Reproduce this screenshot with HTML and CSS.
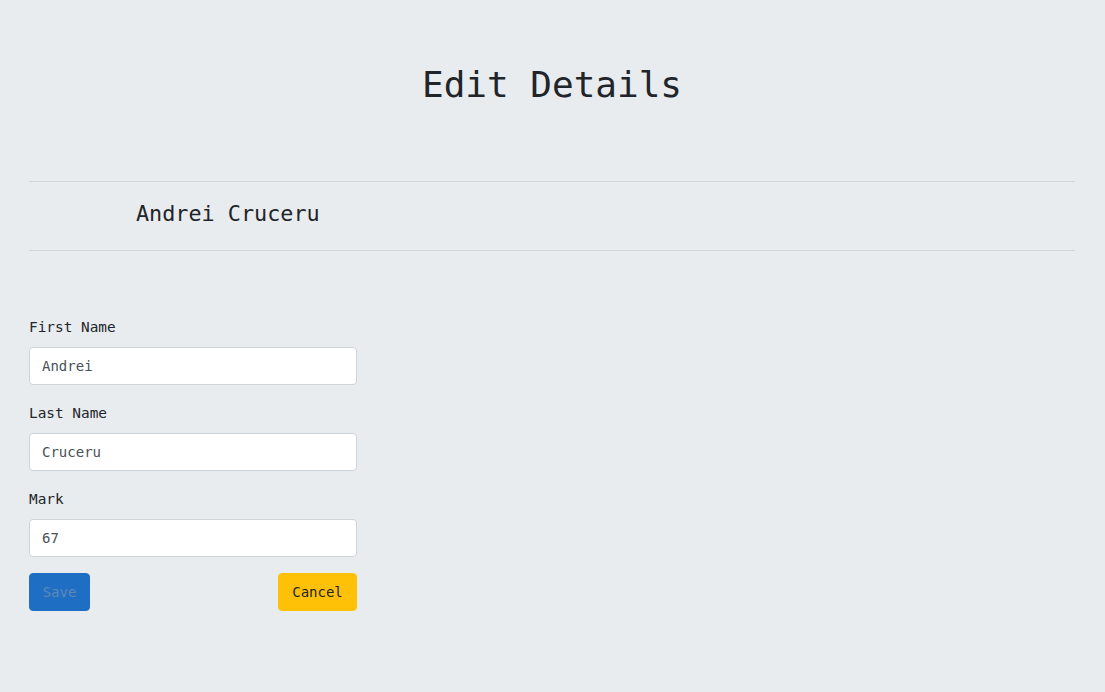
FILE: index.html
```html
<!DOCTYPE html>
<html lang="en">
<head>
<meta charset="utf-8">
<title>Edit Details</title>
<link rel="stylesheet" href="styles.css">
</head>
<body>
<div class="page">
  <h1 class="title">Edit Details</h1>
  <hr class="rule">
  <div class="name-row"><span class="name">Andrei Cruceru</span></div>
  <hr class="rule">
  <form class="form">
    <div class="group">
      <label class="label">First Name</label>
      <input class="input" type="text" value="Andrei">
    </div>
    <div class="group">
      <label class="label">Last Name</label>
      <input class="input" type="text" value="Cruceru">
    </div>
    <div class="group">
      <label class="label">Mark</label>
      <input class="input" type="text" value="67">
    </div>
    <div class="actions">
      <button type="button" class="btn btn-save" disabled>Save</button>
      <button type="button" class="btn btn-cancel">Cancel</button>
    </div>
  </form>
</div>
</body>
</html>
```
FILE: styles.css
```css
html, body {
  margin: 0;
  padding: 0;
}
body {
  background: #e9ecef;
  color: #212529;
  font-family: "DejaVu Sans Mono", "Liberation Mono", monospace;
  height: 692px;
}
.page {
  padding: 0 30px 0 29px;
}
.title {
  margin: 63px 0 0;
  font-size: 36px;
  line-height: 43px;
  font-weight: normal;
  text-align: center;
  color: #212529;
}
.rule {
  margin: 0;
  border: 0;
  border-top: 1px solid #d3d6d9;
  height: 0;
}
.title + .rule {
  margin-top: 75px;
}
.name-row {
  box-sizing: border-box;
  height: 68px;
  display: flex;
  align-items: center;
  padding-left: 107px;
  padding-bottom: 5px;
}
.name {
  font-size: 21.8px;
  line-height: 26px;
  color: #212529;
}
.form {
  width: 328px;
  margin-top: 64px;
}
.group {
  display: flex;
  flex-direction: column;
  margin-bottom: 16px;
}
.label {
  font-size: 14.4px;
  line-height: 24px;
  margin-bottom: 8px;
  color: #212529;
}
.input {
  box-sizing: border-box;
  height: 38px;
  width: 100%;
  padding: 0 12px;
  border: 1px solid #ced4da;
  border-radius: 4px;
  background: #fff;
  font-family: inherit;
  font-size: 14px;
  color: #495057;
  outline: none;
}
.actions {
  display: flex;
  justify-content: space-between;
}
.btn {
  box-sizing: border-box;
  height: 38px;
  padding: 0 12px;
  border-radius: 4px;
  font-family: inherit;
  font-size: 14px;
  border: 1px solid transparent;
}
.btn-save {
  width: 61px;
  background: #1e6fc3;
  border-color: #1e6fc3;
  color: #5f88b6;
}
.btn-cancel {
  width: 79px;
  background: #ffc107;
  border-color: #ffc107;
  color: #212529;
}
```
